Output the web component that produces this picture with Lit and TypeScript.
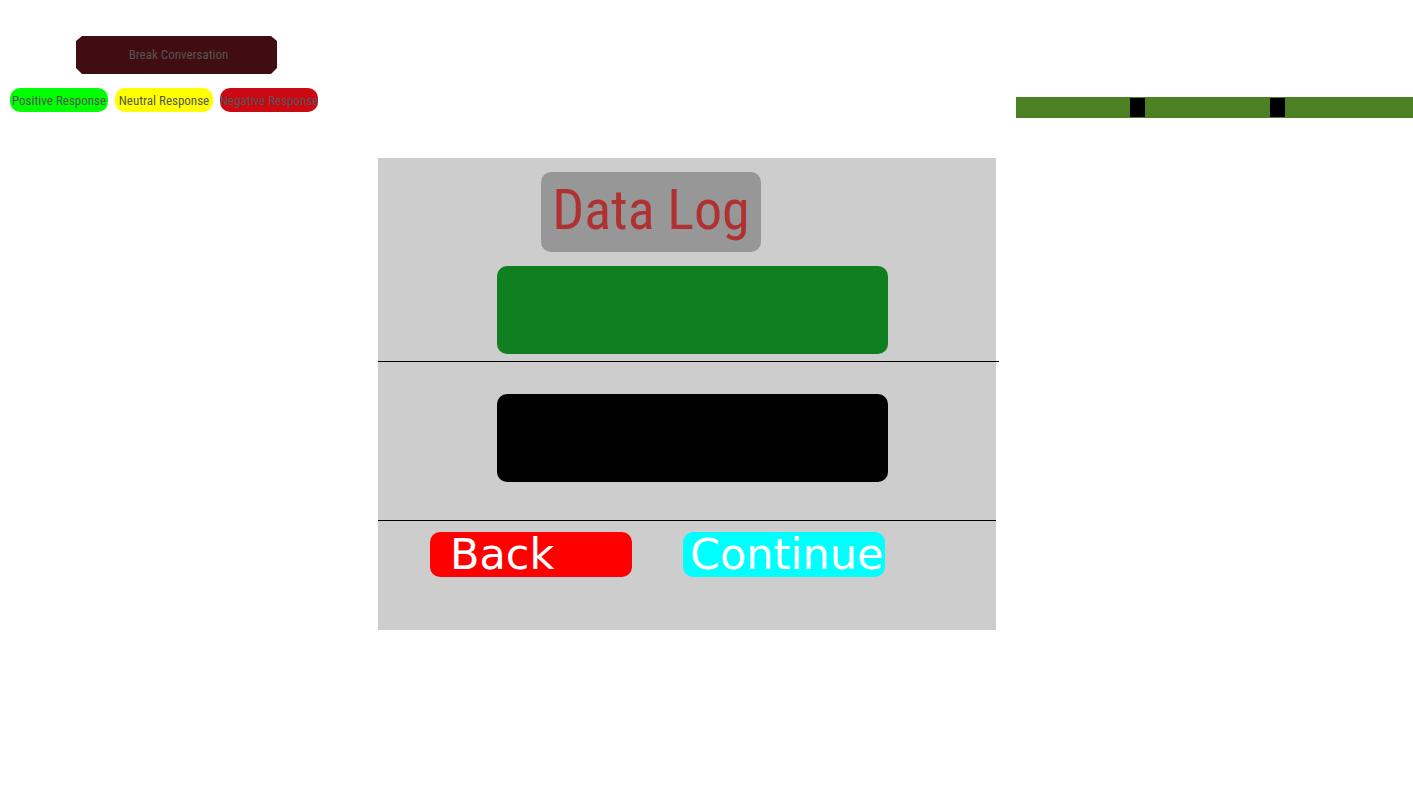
import { LitElement, html, css } from "lit";
import { customElement } from "lit/decorators.js";

@customElement("app-root")
export class AppRoot extends LitElement {
  static styles = css`
    :host {
      display: block;
      min-height: 100vh;
      background: #fff;
      font-family: "Roboto Condensed", Roboto, sans-serif;
    }
    * {
      box-sizing: border-box;
    }
    button {
      border: 0;
      margin: 0;
      padding: 0;
      font-family: inherit;
      white-space: nowrap;
      cursor: pointer;
    }
    .top {
      display: flex;
      justify-content: space-between;
      align-items: flex-end;
      padding: 36px 0 40px 10px;
    }
    .controls {
      display: flex;
      flex-direction: column;
      gap: 14px;
      padding-bottom: 6px;
    }
    .break {
      width: 201px;
      height: 38px;
      margin-left: 66px;
      padding-left: 4px;
      background: #400d12;
      color: #595452;
      font-size: 13px;
      line-height: 38px;
      clip-path: polygon(6px 0, calc(100% - 6px) 0, 100% 5px, 100% calc(100% - 6px), calc(100% - 6px) 100%, 6px 100%, 0 calc(100% - 6px), 0 5px);
    }
    .responses {
      display: flex;
      gap: 7px;
    }
    .response {
      width: 98px;
      height: 24px;
      border-radius: 10px;
      color: #555;
      font-size: 13px;
      line-height: 26px;
      text-align: center;
    }
    .positive {
      background: #00ff00;
    }
    .neutral {
      background: #ffff00;
    }
    .negative {
      background: #cc0812;
    }
    .track {
      display: grid;
      grid-template-columns: 114fr 15px 125fr 15px 128fr;
      width: 28.3%;
      height: 21px;
      padding: 1px 0;
      background: #4c8022;
    }
    .mark {
      background: #000;
    }
    .mark:first-child {
      grid-column: 2;
    }
    .mark:last-child {
      grid-column: 4;
    }
    .log {
      width: 43.74%;
      margin-left: 26.75%;
      background: #cdcdcd;
    }
    .section {
      display: flex;
      flex-direction: column;
      align-items: center;
      padding-left: 11px;
    }
    .first {
      gap: 14px;
      padding-top: 14px;
      padding-bottom: 7px;
    }
    .second {
      padding-top: 32px;
      padding-bottom: 38px;
    }
    .title {
      width: 220px;
      height: 80px;
      margin: 0 83px 0 0;
      border-radius: 10px;
      background: #979797;
      color: #b03131;
      font-size: 56px;
      font-weight: 400;
      line-height: 76px;
      text-align: center;
      white-space: nowrap;
    }
    .entry {
      width: 391px;
      height: 88px;
      border-radius: 10px;
    }
    .reply {
      background: #107f20;
    }
    .message {
      background: #000;
    }
    .rule {
      height: 1px;
      margin: 0;
      border: 0;
      background: #000;
    }
    .wide {
      margin-right: -3px;
    }
    .actions {
      display: flex;
      gap: 51px;
      justify-content: center;
      padding: 11px 59px 53px 0;
    }
    .action {
      width: 202px;
      height: 45px;
      border-radius: 10px;
      color: #fff;
      font-family: "DejaVu Sans", sans-serif;
      font-size: 43px;
      line-height: 45px;
      text-align: left;
    }
    .back {
      padding-left: 20px;
      background: #ff0000;
    }
    .continue {
      padding-left: 7px;
      background: #00ffff;
    }
  `;

  render() {
    return html`
      <header class="top">
        <div class="controls">
          <button class="break" type="button">Break Conversation</button>
          <div class="responses">
            <button class="response positive" type="button">Positive Response</button>
            <button class="response neutral" type="button">Neutral Response</button>
            <button class="response negative" type="button">Negative Response</button>
          </div>
        </div>
        <div class="track"><span class="mark"></span><span class="mark"></span></div>
      </header>
      <main class="log">
        <section class="section first">
          <h1 class="title">Data Log</h1>
          <div class="entry reply"></div>
        </section>
        <hr class="rule wide" />
        <section class="section second">
          <div class="entry message"></div>
        </section>
        <hr class="rule" />
        <div class="actions">
          <button class="action back" type="button">Back</button>
          <button class="action continue" type="button">Continue</button>
        </div>
      </main>
    `;
  }
}
